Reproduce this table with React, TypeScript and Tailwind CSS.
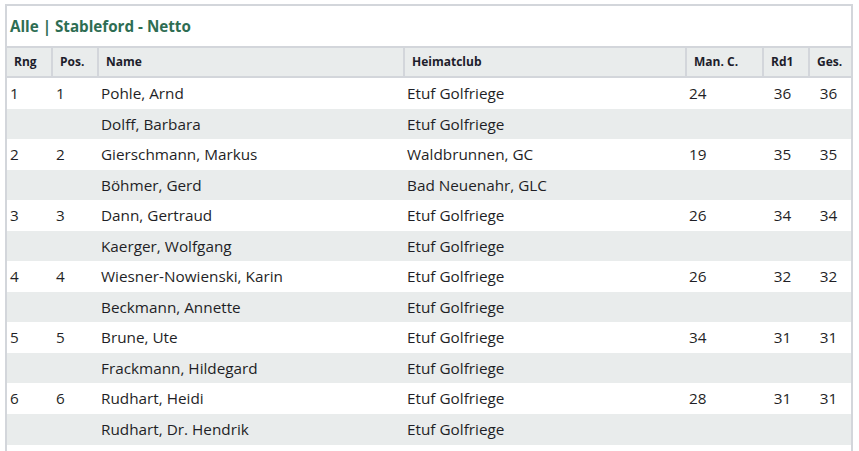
import React from "react";

type Row = { rng?: string; pos?: string; name: string; club: string; hcp?: string; rd1?: string; ges?: string };

const rows: Row[] = [
  { rng: "1", pos: "1", name: "Pohle, Arnd", club: "Etuf Golfriege", hcp: "24", rd1: "36", ges: "36" },
  { name: "Dolff, Barbara", club: "Etuf Golfriege" },
  { rng: "2", pos: "2", name: "Gierschmann, Markus", club: "Waldbrunnen, GC", hcp: "19", rd1: "35", ges: "35" },
  { name: "Böhmer, Gerd", club: "Bad Neuenahr, GLC" },
  { rng: "3", pos: "3", name: "Dann, Gertraud", club: "Etuf Golfriege", hcp: "26", rd1: "34", ges: "34" },
  { name: "Kaerger, Wolfgang", club: "Etuf Golfriege" },
  { rng: "4", pos: "4", name: "Wiesner-Nowienski, Karin", club: "Etuf Golfriege", hcp: "26", rd1: "32", ges: "32" },
  { name: "Beckmann, Annette", club: "Etuf Golfriege" },
  { rng: "5", pos: "5", name: "Brune, Ute", club: "Etuf Golfriege", hcp: "34", rd1: "31", ges: "31" },
  { name: "Frackmann, Hildegard", club: "Etuf Golfriege" },
  { rng: "6", pos: "6", name: "Rudhart, Heidi", club: "Etuf Golfriege", hcp: "28", rd1: "31", ges: "31" },
  { name: "Rudhart, Dr. Hendrik", club: "Etuf Golfriege" },
];

const widths = [45, 46, 306, 282, 77, 46, 42];

export default function App() {
  const th = "border-r-2 border-b-2 border-[#d3d6db] bg-[#e9ecec] pl-[7px] py-[6px] text-left text-[12px] leading-[16px] font-bold text-[#1d1d2b] whitespace-nowrap";
  const td = "px-[3px] py-[5px] text-[15.3px] leading-[20.55px] text-[#1f1f26] whitespace-nowrap";
  return (
    <div className="w-[859px] h-[451px] overflow-hidden bg-white" style={{ fontFamily: '"Open Sans", sans-serif' }}>
      <div className="ml-[5px] mt-[4px] w-[848px] border-2 border-[#d3d6db] bg-white">
        <div className="border-b-2 border-[#d3d6db] px-[3px] py-[10px] text-[15.2px] leading-[20px] font-bold text-[#2e6d53]">
          Alle | Stableford - Netto
        </div>
        <table className="w-[844px] table-fixed border-collapse">
          <colgroup>
            {widths.map((w, i) => (
              <col key={i} style={{ width: w }} />
            ))}
          </colgroup>
          <thead>
            <tr>
              <th className={th}>Rng</th>
              <th className={th}>Pos.</th>
              <th className={th}>Name</th>
              <th className={th}>Heimatclub</th>
              <th className={th}>Man. C.</th>
              <th className={th}>Rd1</th>
              <th className="border-b-2 border-[#d3d6db] bg-[#e9ecec] pl-[7px] py-[6px] text-left text-[12px] leading-[16px] font-bold text-[#1d1d2b] whitespace-nowrap">Ges.</th>
            </tr>
          </thead>
          <tbody>
            {rows.map((r, i) => (
              <tr key={i} className={i % 2 === 1 ? "bg-[#e9ecec]" : "bg-white"}>
                <td className={td}>{r.rng ?? ""}</td>
                <td className={td + " pl-[4px]"}>{r.pos ?? ""}</td>
                <td className={td}>{r.name}</td>
                <td className={td}>{r.club}</td>
                <td className={td}>{r.hcp ?? ""}</td>
                <td className={td + " text-center pr-[10px]"}>{r.rd1 ?? ""}</td>
                <td className={td + " text-center pr-[6px]"}>{r.ges ?? ""}</td>
              </tr>
            ))}
          </tbody>
        </table>
        <div className="h-[40px] bg-white" />
      </div>
    </div>
  );
}
